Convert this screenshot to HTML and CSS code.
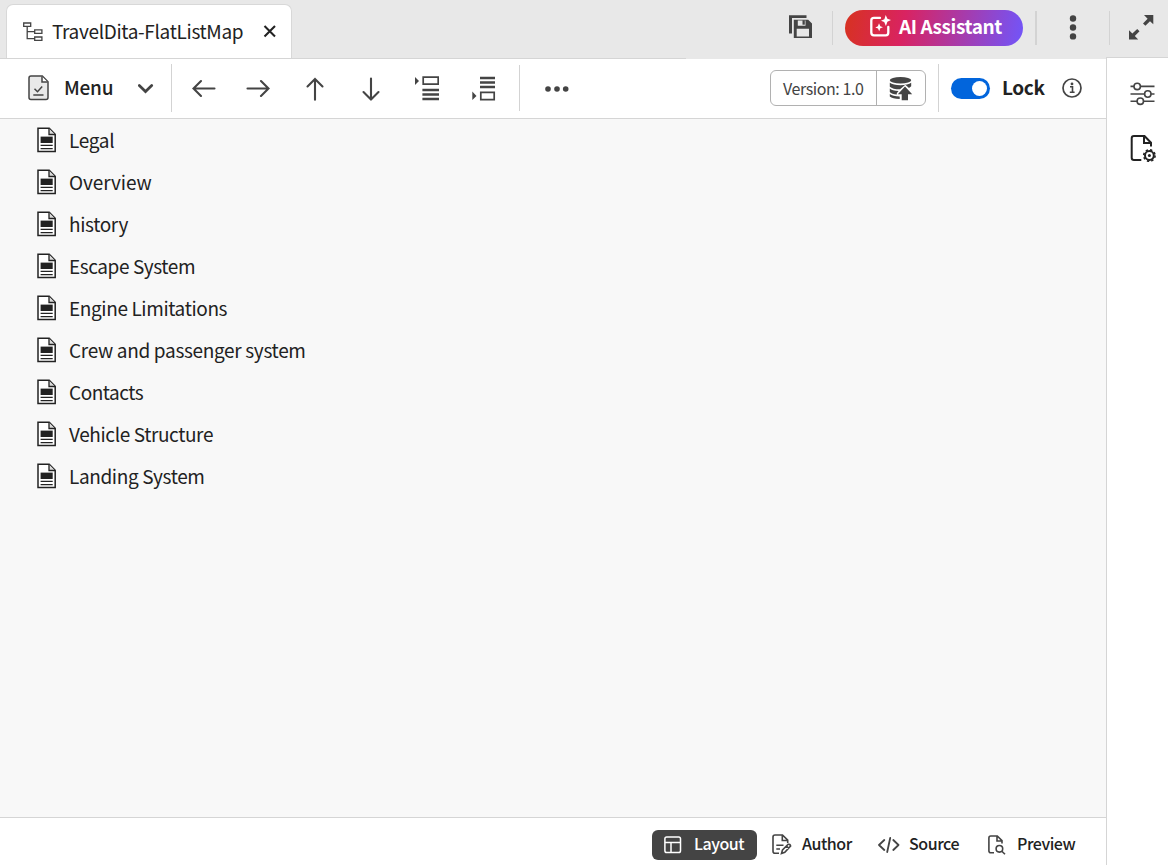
FILE: index.html
```html
<!DOCTYPE html>
<html lang="en">
<head>
<meta charset="utf-8">
<title>TravelDita-FlatListMap</title>
<link rel="stylesheet" href="styles.css">
</head>
<body>
<svg class="defs" aria-hidden="true">
  <symbol id="topic" viewBox="0 0 20 26">
    <path d="M1 1.2H12.2L18.2 7.4V24.4H1Z" fill="#fff" stroke="#222" stroke-width="1.5"/>
    <path d="M12 1.5V7.5H18" fill="#ddd" stroke="#222" stroke-width="1.3"/>
    <path d="M3.6 9.6H15.7V16H3.6Z" fill="#222"/>
    <path d="M3.6 18.4H15.7M3.6 21.6H15.7" stroke="#222" stroke-width="1.2"/>
  </symbol>
</svg>
<header class="header">
  <div class="tabs">
    <div class="tab">
      <svg class="tree" width="20" height="20" viewBox="0 0 20 20" fill="none" stroke="#444" stroke-width="1.3"><path d="M.7 1H7.7V4.3H.7ZM11.7 7.9H18.9V11.3H11.7ZM11.7 15H18.9V18.4H11.7ZM4.2 4.3V16.7H11.7M4.2 9.6H11.7"/></svg>
      <span class="tab-title">TravelDita-FlatListMap</span>
      <svg class="close" width="13" height="13" viewBox="0 0 13 13" stroke="#222" stroke-width="2.1"><path d="M1.5 1L12 11.5M12 1L1.5 11.5"/></svg>
    </div>
  </div>
  <svg class="save" width="24" height="24" viewBox="0 0 24 24"><path d="M0 .3H17.5V3H3V18.5H0Z" fill="#444"/><path fill="#444" fill-rule="evenodd" d="M4.8 4.8H19.2L23 8.4V23H4.8ZM8.8 5.5V10.8H16.5V5.5ZM7.7 13.7V21.5H20V13.7Z"/><path d="M13.5 5.2H15.8V9.7H13.5Z" fill="#444"/></svg>
  <i class="rule rule-save"></i>
  <button class="assistant">
    <svg width="22" height="22" viewBox="0 0 22 22"><path d="M10 2.9H4Q1.3 2.9 1.3 5.5V17.6Q1.3 20.4 4 20.4H15.8Q18.3 20.4 18.3 17.6V12" fill="none" stroke="#fff" stroke-width="2.3" stroke-linecap="round"/><path d="M15.7 0L17.4 3.8L21 5L17.4 6.7L15.9 11L14.2 7L11 5.7L14.4 4.2ZM9 8.2L10.3 11.2L13 12.2L10.3 13.3L9.2 16.3L8 13.5L5.3 12.4L7.9 11.2Z" fill="#fff"/></svg>
    <span class="assistant-label">AI Assistant</span>
  </button>
  <i class="rule rule-wide"></i>
  <svg class="kebab" width="8" height="26" viewBox="0 0 8 26" fill="#444"><circle cx="4" cy="4.5" r="3.2"/><circle cx="4" cy="13.5" r="3.2"/><circle cx="4" cy="22.4" r="3.2"/></svg>
  <i class="rule"></i>
  <svg class="expand" width="25" height="25" viewBox="0 0 25 25" fill="#444"><path d="M15 0H24.3V9.2L21 6.3L16.4 10.8L14 8.4L18.6 3.7ZM0 15.2L3.4 18.4L8.2 14L10.5 16.3L5.8 21L9.2 24.4H0Z"/></svg>
</header>
<div class="workspace">
  <main class="editor">
    <div class="toolbar">
      <svg class="doc-menu" width="22" height="26" viewBox="0 0 22 26" fill="none" stroke="#444" stroke-width="1.5"><path d="M3 1H14.3L20 6.8V22.5Q20 24.5 18 24.5H3Q1 24.5 1 22.5V3Q1 1 3 1Z" fill="#e9e9e9"/><path d="M14 1.5V7H19.5" fill="#fff"/><path d="M6.5 13.7L9.5 16.7L14.2 11.5M5.3 20H15.5"/></svg>
      <span class="menu-label">Menu</span>
      <svg class="chevron" width="16" height="10" viewBox="0 0 16 10" fill="none" stroke="#444" stroke-width="2.7" stroke-linecap="round"><path d="M1.3 1.5L7.5 7.5L13.7 1.5"/></svg>
      <i class="rule rule-tall"></i>
      <svg class="arrow arrow-left" width="24" height="24" viewBox="0 0 24 24"><path d="M22.5 12.5H1.5M9 5L1.5 12.5L9 20"/></svg>
      <svg class="arrow arrow-right" width="24" height="24" viewBox="0 0 24 24"><path d="M1.5 12.5H22.5M15 5L22.5 12.5L15 20"/></svg>
      <svg class="arrow arrow-up" width="24" height="24" viewBox="0 0 24 24"><path d="M12 22.8V2M4.5 9.5L12 2L19.5 9.5"/></svg>
      <svg class="arrow arrow-down" width="24" height="24" viewBox="0 0 24 24"><path d="M12 1.5V22.5M4.5 15L12 22.5L19.5 15"/></svg>
      <svg class="insert-before" width="24" height="26" viewBox="0 0 24 26"><path d="M0 1V9L4 5Z" fill="#444"/><path d="M8.2 1.2H23.2V8.2H8.2Z" fill="none" stroke="#444" stroke-width="1.7"/><path d="M7.4 14H24M7.4 18.5H24M7.4 23H24" stroke="#444" stroke-width="2.6"/></svg>
      <svg class="insert-after" width="24" height="26" viewBox="0 0 24 26"><path d="M.3 15.5V24L4.5 20Z" fill="#444"/><path d="M8.8 16.3H22.2V23.7H8.8Z" fill="none" stroke="#444" stroke-width="1.7"/><path d="M8 2H23M8 6.5H23M8 11H23" stroke="#444" stroke-width="2.6"/></svg>
      <i class="rule rule-mid"></i>
      <svg class="more" width="24" height="8" viewBox="0 0 24 8" fill="#444"><circle cx="3" cy="4" r="2.8"/><circle cx="12" cy="4" r="2.8"/><circle cx="20.7" cy="4" r="2.8"/></svg>
      <div class="version">
        <span class="version-label">Version: 1.0</span>
        <span class="version-save"><svg width="24" height="24" viewBox="0 0 24 24" fill="#444"><ellipse cx="11.5" cy="3.3" rx="10.7" ry="3.2"/><path d="M.8 5.8Q4 8.2 11.5 8.2T22.2 5.8V9.2L20 11L16.3 7.8L11 12.3Q3.5 12.2.8 9.7ZM.8 11.5Q3 13.6 9.5 13.9L7.8 16.2V17.5Q2.8 17 .8 15ZM.8 17Q3.5 19.3 10.7 19.6V22Q3.3 22 .8 19.6Z"/><path d="M16 9.5L23.2 17.3H19V23.2H12.7V17.3H8.8Z"/></svg></span>
      </div>
      <i class="rule rule-tall"></i>
      <span class="toggle"><i class="knob"></i></span>
      <span class="lock-label">Lock</span>
      <svg class="info" width="20" height="20" viewBox="0 0 20 20"><circle cx="10" cy="10" r="9" fill="none" stroke="#444" stroke-width="1.7"/><circle cx="10" cy="5.9" r="1.4" fill="#444"/><path d="M8 8.8H10.5V14M7.8 14.3H12.6" fill="none" stroke="#444" stroke-width="1.6"/></svg>
    </div>
    <ul class="topics">
      <li class="topic"><svg class="topic-icon"><use href="#topic"/></svg><span class="t-legal">Legal</span></li>
      <li class="topic"><svg class="topic-icon"><use href="#topic"/></svg><span class="t-overview">Overview</span></li>
      <li class="topic"><svg class="topic-icon"><use href="#topic"/></svg><span class="t-history">history</span></li>
      <li class="topic"><svg class="topic-icon"><use href="#topic"/></svg><span class="t-escape">Escape System</span></li>
      <li class="topic"><svg class="topic-icon"><use href="#topic"/></svg><span class="t-engine">Engine Limitations</span></li>
      <li class="topic"><svg class="topic-icon"><use href="#topic"/></svg><span class="t-crew">Crew and passenger system</span></li>
      <li class="topic"><svg class="topic-icon"><use href="#topic"/></svg><span class="t-contacts">Contacts</span></li>
      <li class="topic"><svg class="topic-icon"><use href="#topic"/></svg><span class="t-vehicle">Vehicle Structure</span></li>
      <li class="topic"><svg class="topic-icon"><use href="#topic"/></svg><span class="t-landing">Landing System</span></li>
    </ul>
    <footer class="modes">
      <div class="mode mode-layout"><svg width="18" height="18" viewBox="0 0 18 18" fill="none" stroke="#fff" stroke-width="1.5"><rect x=".9" y=".9" width="15.6" height="15.6" rx="1.8"/><path d="M1 6.6H16.5M7 6.6V16.5"/></svg><span>Layout</span></div>
      <div class="mode mode-author"><svg width="20" height="21" viewBox="0 0 20 21" fill="none" stroke="#444" stroke-width="1.6"><path d="M7 19.3H3Q1 19.3 1 17.3V3Q1 1 3 1H10.5L15.7 6.2V9M10.3 1.3V6.5H15.5M4.3 11.2H11.5M4.3 15H8"/><path d="M9.5 19.5L10.5 16L16.2 10.3Q18 9.8 18.6 12L12.8 18.3ZM14.5 12L17 14.5"/></svg><span>Author</span></div>
      <div class="mode mode-source"><svg width="22" height="16" viewBox="0 0 22 16" fill="none" stroke="#444" stroke-width="1.8" stroke-linecap="round" stroke-linejoin="round"><path d="M6.3 3L1 8L6.3 13M15.3 3L20.5 8L15.3 13M12.2 1L9.2 15"/></svg><span>Source</span></div>
      <div class="mode mode-preview"><svg width="18" height="20" viewBox="0 0 18 20" fill="none" stroke="#444" stroke-width="1.6"><path d="M6 17.8H2.8Q.9 17.8.9 15.8V3Q.9 1 2.8 1H9.3L14 5.7V8.5M9 1.2V6H13.8"/><circle cx="11.4" cy="13.8" r="3.3"/><path d="M13.8 16.2L17 19.3"/></svg><span>Preview</span></div>
    </footer>
  </main>
  <aside class="rail">
    <svg class="sliders" width="26" height="24" viewBox="0 0 26 24" fill="none" stroke="#444" stroke-width="1.6"><path d="M.5 4.4H4M10.6 4.4H24.5M.5 12H14.7M21 12H24.5M.5 19.2H7M13.7 19.2H24.5"/><circle cx="7.2" cy="4.4" r="3.2"/><circle cx="17.8" cy="12" r="3.2"/><circle cx="10.3" cy="19.2" r="3.2"/></svg>
    <svg class="properties" width="27" height="28" viewBox="0 0 27 28" fill="none" stroke="#222" stroke-width="2"><path d="M11.3 25H4Q1.7 25 1.7 22.7V3.2Q1.7 1 4 1H14.5L21 7.7V11.5M14 1.5V8H20.5"/><circle cx="19.4" cy="20.5" r="4.4"/><circle cx="19.4" cy="20.5" r="1.5" fill="#222" stroke="none"/><circle cx="19.4" cy="20.5" r="5.7" stroke-width="1.6" stroke-dasharray="2.3 2.177"/></svg>
  </aside>
</div>
</body>
</html>
```
FILE: styles.css
```css
* { box-sizing: border-box; }
body { margin: 0; width: 1168px; height: 865px; overflow: hidden; background: #fff; color: #222; font: 19px/28px "Noto Sans CJK SC", "Noto Sans", sans-serif; display: flex; flex-direction: column; }
svg, .rule { display: block; flex: none; }
span { white-space: nowrap; flex: none; }
.defs { position: absolute; width: 0; height: 0; }
.header { height: 58px; flex: none; display: flex; align-items: flex-start; background: #e8e8e8; }
.tabs { width: 686px; height: 59px; flex: none; padding: 4px 0 0 6px; border-bottom: 1px solid #d5d5d5; }
.tab { width: 286px; height: 54px; display: flex; align-items: flex-start; background: #fff; border: 1px solid #d8d8d8; border-bottom: 0; border-radius: 7px 7px 0 0; padding-left: 16px; }
.tree { margin-top: 17px; }
.tab-title { width: 192px; margin: 12px 19px 0 9px; letter-spacing: -0.33px; }
.close { margin-top: 20px; }
.rule { width: 1px; height: 34px; margin-top: 11px; background: #d3d3d3; }
.save { margin: 15px 19px 0 103px; }
.assistant { width: 178px; height: 36px; flex: none; margin: 10px 12px 0; padding: 5px 0 0 25px; display: flex; gap: 7px; align-items: flex-start; border: 0; border-radius: 18px; background: linear-gradient(100deg, #d73220 0%, #d92361 33%, #7155fa 100%); color: #fff; font: 700 19px/25px "Noto Sans CJK SC", sans-serif; letter-spacing: -0.42px; }
.assistant-label { line-height: 22px; }
.rule-wide { width: 2px; }
.kebab { margin: 14px 32px 0; }
.expand { margin: 15px 0 0 19px; }
.workspace { flex: 1; min-height: 0; display: flex; }
.editor { width: 1106px; display: flex; flex-direction: column; padding-top: 1px; background: linear-gradient(#e8e8e8 1px, #fff 1px); }
.tabs, .toolbar { z-index: 1; }
.toolbar { height: 60px; flex: none; display: flex; align-items: center; padding-left: 28px; background: #fff; border-bottom: 1px solid #d5d5d5; }
.doc-menu { margin-top: -2px; }
.menu-label { width: 50px; margin: -3px 24px 0 14px; font-weight: 500; letter-spacing: -0.25px; }
.rule-tall { height: 48px; margin: -1px 0 0; }
.rule-mid { height: 46px; margin: -1px 0 0 23px; }
.chevron { margin-right: 17px; }
.arrow { fill: none; stroke: #444; stroke-width: 2.1; stroke-linecap: round; }
.arrow-left { margin-left: 20px; }
.arrow-right { margin-left: 30px; }
.arrow-left, .arrow-right { margin-top: -1px; }
.arrow-up { margin-left: 33px; }
.arrow-down { margin-left: 32px; }
.arrow-up, .arrow-down { margin-top: 1px; }
.insert-before { margin-left: 32px; }
.insert-after { margin-left: 33px; }
.more { margin-left: 25px; }
.version { width: 156px; height: 36px; margin: -1px 12px 0 201px; flex: none; display: flex; border: 1px solid #b1b1b1; border-radius: 6px; color: #444; }
.version-label { width: 106px; padding-left: 12px; border-right: 1px solid #b1b1b1; font-size: 16px; line-height: 34px; letter-spacing: -0.42px; }
.version-save { padding: 6px 0 0 12px; }
.toggle { width: 39px; height: 21px; margin-left: 12px; padding: 3px; display: flex; justify-content: flex-end; border-radius: 11px; background: #0265dc; }
.knob { width: 15px; height: 15px; border-radius: 50%; background: #fff; }
.lock-label { width: 43px; margin: -3px 17px 0 12px; font-weight: 700; letter-spacing: -0.4px; }
.info { margin-top: -1px; }
.topics { flex: 1; margin: 0; padding: 1px 0 0 37px; list-style: none; background: #f8f8f8; }
.topic { height: 42px; display: flex; gap: 12px; align-items: center; letter-spacing: -0.38px; }
.topic span { margin-top: -2px; }
.topic .t-legal { letter-spacing: -0.3px; }
.topic .t-overview { letter-spacing: -0.08px; }
.topic .t-history { letter-spacing: -0.35px; }
.topic .t-escape { letter-spacing: -0.42px; }
.topic .t-crew { letter-spacing: -0.32px; }
.topic .t-contacts { letter-spacing: -0.46px; }
.topic-icon { width: 20px; height: 26px; margin-top: -2px; }
.modes { height: 48px; flex: none; display: flex; border-top: 1px solid #d5d5d5; padding: 12px 0 0 652px; background: #fff; font-size: 16px; font-weight: 500; letter-spacing: -0.45px; }
.mode { height: 30px; flex: none; display: flex; align-items: center; }
.mode svg { margin-top: -1px; }
.mode span { margin-top: -4px; }
.mode-layout { width: 105px; padding-left: 12px; gap: 12px; border-radius: 6px; background: #444; color: #fff; }
.mode-author { width: 106px; padding-left: 15px; gap: 10px; }
.mode-source { width: 110px; padding-left: 15px; gap: 9px; }
.mode-preview { padding-left: 15px; gap: 11px; }
.rail { width: 62px; margin-top: -1px; padding: 24px 0 0 23px; border-left: 1px solid #d5d5d5; border-top: 1px solid #d5d5d5; background: #fff; }
.properties { margin-top: 29px; }
```
